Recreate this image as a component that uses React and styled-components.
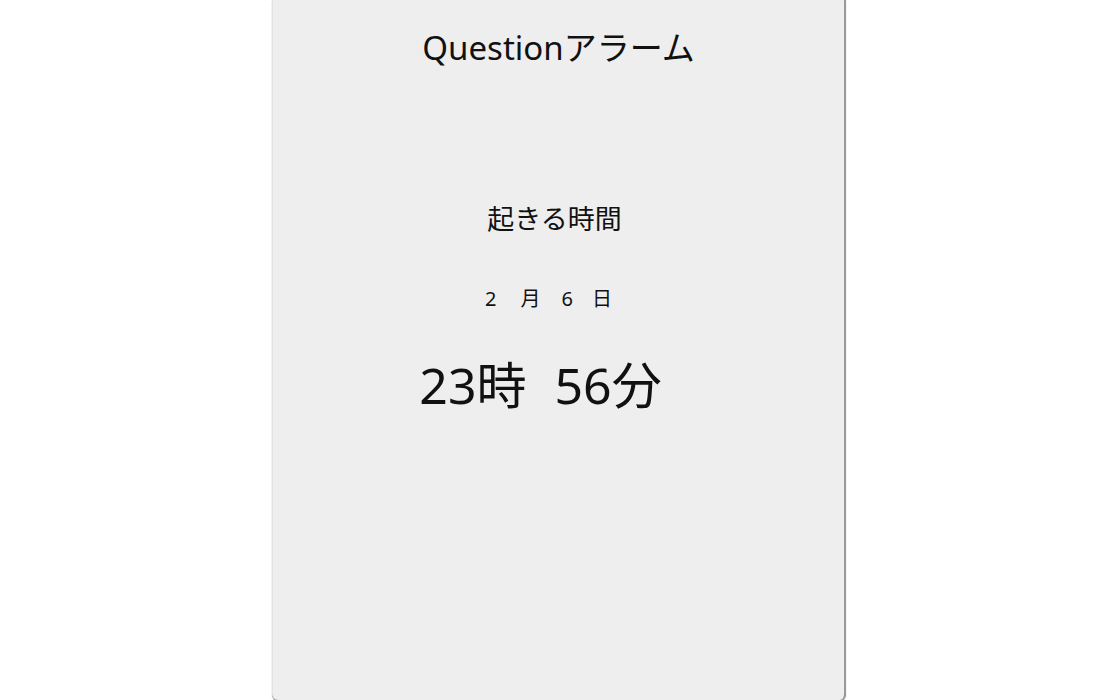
import styled, { createGlobalStyle } from "styled-components";

const GlobalStyle = createGlobalStyle`
  html, body {
    margin: 0;
    padding: 0;
    background: #ffffff;
  }
  body {
    font-family: "Noto Sans", "Noto Sans CJK JP", sans-serif;
    color: #111111;
  }
`;

const Page = styled.div`
  height: 700px;
  padding-left: 18px;
  display: flex;
  justify-content: center;
  overflow: hidden;
`;

const Card = styled.div`
  width: 574px;
  height: 700px;
  box-sizing: border-box;
  background: #eeeeee;
  border-right: 2px solid #9a9a9a;
  border-left: 1px solid #e2e2e2;
  border-bottom-left-radius: 6px;
  border-bottom-right-radius: 6px;
  box-shadow: 0 1px 1px rgba(0, 0, 0, 0.5);
  display: flex;
  flex-direction: column;
  align-items: center;
  padding-top: 26px;
`;

const Title = styled.h1`
  margin: 0;
  font-size: 33px;
  font-weight: 400;
  line-height: 44px;
`;

const Label = styled.div`
  margin-top: 131px;
  margin-right: 8px;
  font-size: 27px;
  line-height: 36px;
`;

const DateRow = styled.div`
  margin-top: 48px;
  margin-right: 20px;
  display: flex;
  align-items: center;
  font-size: 20px;
  line-height: 28px;
`;

const DatePart = styled.span`
  margin-right: ${(p) => p.$gap || 0}px;
`;

const Time = styled.div`
  margin-top: 40px;
  margin-right: 36px;
  font-size: 50px;
  line-height: 64px;
  display: flex;
  gap: 28px;
`;

const App = () => {
  return (
    <>
      <GlobalStyle />
      <Page>
        <Card>
          <Title>Questionアラーム</Title>
          <Label>起きる時間</Label>
          <DateRow>
            <DatePart $gap={24}>2</DatePart>
            <DatePart $gap={21}>月</DatePart>
            <DatePart $gap={19}>6</DatePart>
            <DatePart>日</DatePart>
          </DateRow>
          <Time>
            <span>23時</span>
            <span>56分</span>
          </Time>
        </Card>
      </Page>
    </>
  );
};

export default App;
